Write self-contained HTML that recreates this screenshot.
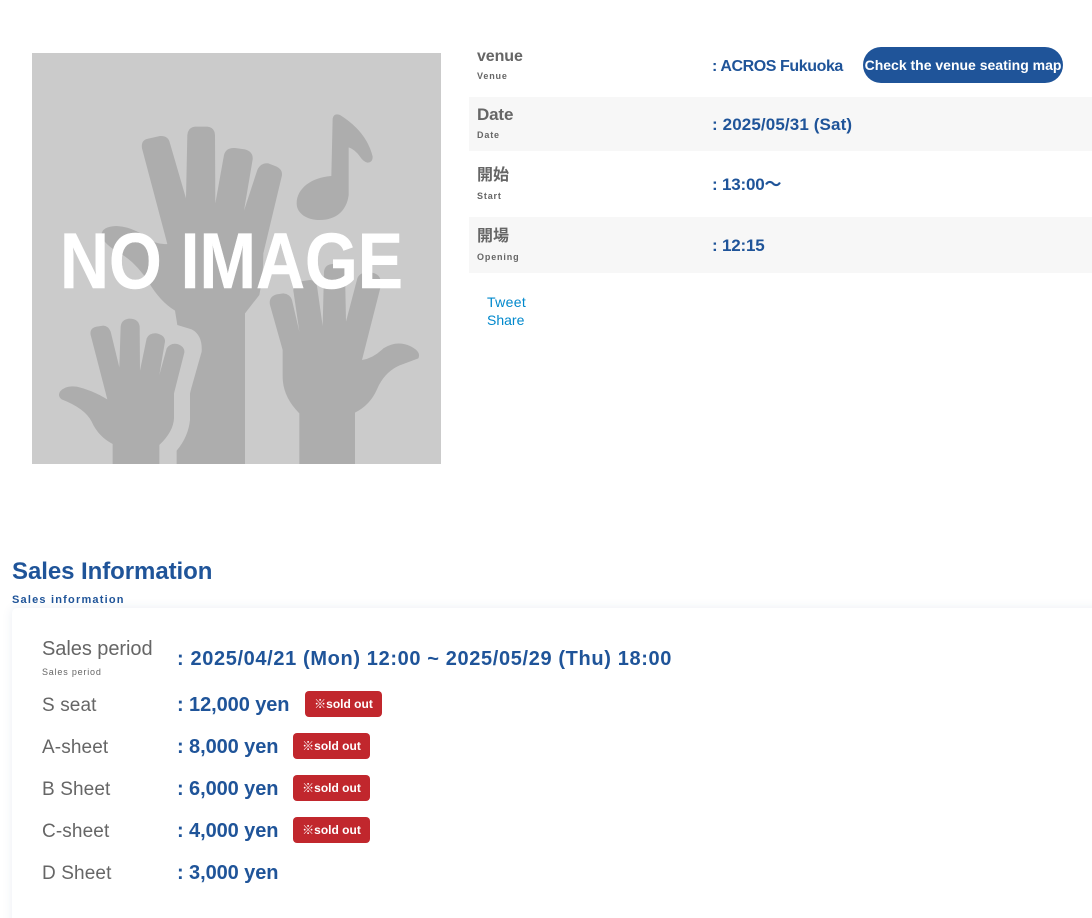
<!DOCTYPE html>
<html lang="en"><head><meta charset="utf-8"><title>Event</title>
<style>
html,body{margin:0;padding:0;background:#fff;overflow:hidden}
#w{position:relative;width:1092px;height:918px;overflow:hidden;font-family:"Liberation Sans","Noto Sans CJK JP",sans-serif}
.t{position:absolute;white-space:nowrap;line-height:20px;height:20px}
.l{color:#666;font-weight:700;font-size:16px}
.s{color:#666;font-weight:700;font-size:9px;letter-spacing:.85px}
.v{color:#1f5499;font-weight:700;font-size:16px}
.d{font-size:17px;letter-spacing:.12px}
.k{color:#666;font-size:19px;letter-spacing:.12px}
.p{color:#1f5499;font-weight:700;font-size:20px;letter-spacing:-.08px}
.b{position:absolute;width:77px;height:26px;background:#c1272d;border-radius:4px;color:#fff;font-weight:700;font-size:12px;line-height:27px;text-align:center;white-space:nowrap}
.a{color:#0088cc;font-size:14px}
.r{position:absolute;left:469px;width:623px;background:#f7f7f7}
</style></head><body><div id="w">
<svg style="position:absolute;left:0;top:0" width="470" height="480" viewBox="0 0 470 480">
<g transform="translate(20 40) scale(.33333)">
<rect x="36" y="39" width="1227" height="1233" fill="#cbcbcb"/>
<g fill="#adadad">
<path d="M470 1272V1232Q505 1190 510 1140V1060L513 1048L545 935Q548 885 515 868L472 855L465 812Q420 785 385 725Q345 665 300 640Q255 615 245 590Q240 560 290 558Q335 560 380 592Q410 615 442 612L366 325Q362 300 385 296L420 288Q445 286 450 310L498 475L502 285Q504 262 525 260H562Q584 262 585 285L586 490L612 345Q618 322 645 324L675 328Q700 335 698 358L672 512L712 390Q722 368 745 370L770 380Q790 390 785 410L730 640Q730 710 718 765L675 820V1272Z"/>
<path d="M838 1272V1120Q788 1070 788 1010V930L750 795Q745 770 770 763L790 760Q810 762 816 780L838 875L820 752Q820 728 842 724L870 720Q890 722 892 745L908 858L912 695Q915 672 940 672H955Q975 675 975 695L978 845L1012 715Q1020 695 1050 697Q1088 700 1082 740L1026 960Q1060 955 1090 925Q1130 900 1170 918Q1205 935 1195 955L1150 972Q1095 990 1070 1050Q1050 1095 1005 1118V1272Z"/>
<path d="M278 1272V1212Q235 1190 215 1145Q195 1105 125 1078Q112 1068 120 1055Q135 1035 170 1040Q215 1050 262 1078L212 885Q208 865 230 860L250 857Q265 858 272 875L298 982L302 860Q304 838 328 836Q356 836 359 860L360 992L380 895Q388 878 410 880Q436 886 435 905L418 1005L440 925Q452 908 472 912Q495 920 493 938L462 1060V1135Q460 1175 418 1215V1272Z"/>
<path d="M938 235Q942 218 960 225Q1040 275 1058 350Q1058 368 1042 368Q1030 365 1020 350Q1005 328 986 322V465C980 515 945 540 900 540C860 540 830 520 830 490C830 445 875 412 934 408Z"/>
</g>
</g>
<text x="60" y="288" font-family="Liberation Sans,sans-serif" font-size="79" font-weight="700" fill="#fff" stroke="#fff" stroke-width=".5" textLength="343" lengthAdjust="spacingAndGlyphs">NO IMAGE</text>
</svg>

<div class="r" style="top:97px;height:54px"></div>
<div class="r" style="top:217px;height:56px"></div>

<div class="t l" style="left:477px;top:47px;letter-spacing:-.1px">venue</div>
<div class="t s" style="left:477px;top:66px">Venue</div>
<div class="t v" style="left:712px;top:57px;letter-spacing:-.42px">: ACROS Fukuoka</div>
<div style="position:absolute;left:863px;top:47px;width:200px;height:36px;background:#1f5499;border-radius:18px;color:#fff;font-weight:700;font-size:14px;line-height:36px;text-align:center;white-space:nowrap">Check the venue seating map</div>

<div class="t l" style="left:477px;top:105px;font-size:17px;letter-spacing:-.15px">Date</div>
<div class="t s" style="left:477px;top:125px">Date</div>
<div class="t v d" style="left:712px;top:115px">: 2025/05/31 (Sat)</div>

<div class="t l" style="left:477px;top:166px">開始</div>
<div class="t s" style="left:477px;top:186px">Start</div>
<div class="t v d" style="left:712px;top:175px;letter-spacing:-.2px">: 13:00～</div>

<div class="t l" style="left:477px;top:227px">開場</div>
<div class="t s" style="left:477px;top:247px">Opening</div>
<div class="t v d" style="left:712px;top:236px;letter-spacing:-.2px">: 12:15</div>

<div class="t a" style="left:487px;top:292px;letter-spacing:.35px">Tweet</div>
<div class="t a" style="left:487px;top:310px">Share</div>

<div class="t" style="left:12px;top:562px;color:#1f5499;font-weight:700;font-size:24px;letter-spacing:-.06px">Sales Information</div>
<div class="t" style="left:12px;top:590px;color:#1f5499;font-weight:700;font-size:11px;letter-spacing:1.2px">Sales information</div>

<div style="position:absolute;left:12px;top:608px;width:1100px;height:340px;background:#fff;border-radius:5px;box-shadow:0 0 10px rgba(60,90,140,.1)"></div>

<div class="t k" style="left:42px;top:639px;font-size:20px;letter-spacing:-.05px">Sales period</div>
<div class="t" style="left:42px;top:662px;color:#666;font-size:9px;letter-spacing:.8px">Sales period</div>
<div class="t p" style="left:177px;top:649px;letter-spacing:.63px">: 2025/04/21 (Mon) 12:00 ~ 2025/05/29 (Thu) 18:00</div>

<div class="t k" style="left:42px;top:696px">S seat</div>
<div class="t p" style="left:177px;top:695px">: 12,000 yen</div>
<div class="b" style="left:305px;top:691px">※sold out</div>

<div class="t k" style="left:42px;top:738px">A-sheet</div>
<div class="t p" style="left:177px;top:737px">: 8,000 yen</div>
<div class="b" style="left:293px;top:733px">※sold out</div>

<div class="t k" style="left:42px;top:780px">B Sheet</div>
<div class="t p" style="left:177px;top:779px">: 6,000 yen</div>
<div class="b" style="left:293px;top:775px">※sold out</div>

<div class="t k" style="left:42px;top:822px">C-sheet</div>
<div class="t p" style="left:177px;top:821px">: 4,000 yen</div>
<div class="b" style="left:293px;top:817px">※sold out</div>

<div class="t k" style="left:42px;top:864px">D Sheet</div>
<div class="t p" style="left:177px;top:863px">: 3,000 yen</div>
</div></body></html>
